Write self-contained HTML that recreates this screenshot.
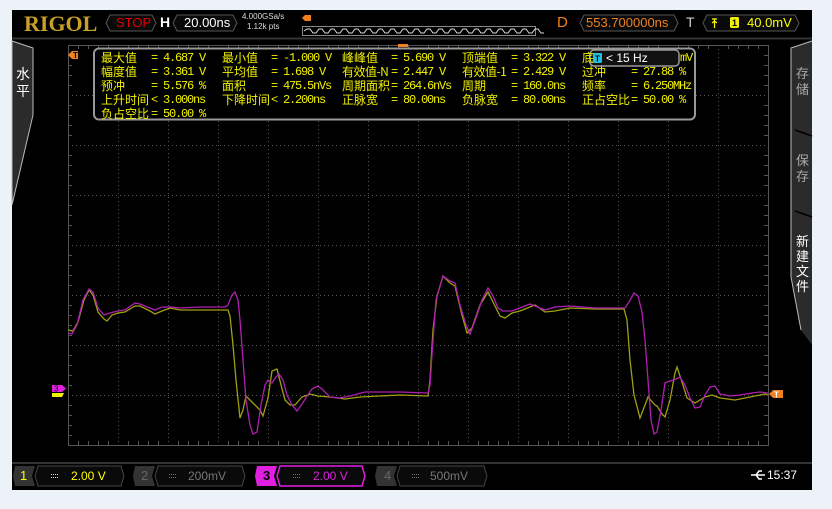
<!DOCTYPE html>
<html><head><meta charset="utf-8"><style>
*{margin:0;padding:0;box-sizing:border-box}
body{width:832px;height:509px;background:#edf1f8;position:relative;overflow:hidden;font-family:"Liberation Sans","Noto Sans CJK SC",sans-serif}
#scr{position:absolute;left:12px;top:10px;width:800px;height:480px;background:#000}
.a{position:absolute;white-space:nowrap}
.m{position:absolute;color:#f2f200;font-size:12px;letter-spacing:-1.2px;line-height:14px;font-family:"Liberation Mono","Noto Sans CJK SC",monospace;white-space:nowrap}
.ml{position:absolute;color:#f2f200;font-size:12px;line-height:14px;font-family:"Noto Sans CJK SC",sans-serif;white-space:nowrap}
</style></head><body>
<div id="scr"></div>
<svg class="a" style="left:0;top:0" width="832" height="509">
 <line x1="12" y1="38.5" x2="812" y2="38.5" stroke="#333" stroke-width="2"/>
 <polygon points="12,41 33,48 33,115 12,205" fill="#2b2b2b" stroke="#bbb" stroke-width="1"/>
 <polygon points="812,41 791,48 791,277 801,330 812,345" fill="#2b2b2b"/>
 <polyline points="812,41 791,48 791,277 801,330" fill="none" stroke="#bbb"/>
 <line x1="795" y1="130" x2="812" y2="136" stroke="#000" stroke-width="1.5"/>
 <line x1="795" y1="211" x2="812" y2="217" stroke="#000" stroke-width="1.5"/>
 <g stroke="#555" stroke-width="1" stroke-dasharray="1,3">
  <line x1="118.5" y1="45" x2="118.5" y2="445"/><line x1="168.5" y1="45" x2="168.5" y2="445"/>
  <line x1="218.5" y1="45" x2="218.5" y2="445"/><line x1="268.5" y1="45" x2="268.5" y2="445"/>
  <line x1="318.5" y1="45" x2="318.5" y2="445"/><line x1="368.5" y1="45" x2="368.5" y2="445"/>
  <line x1="418.5" y1="45" x2="418.5" y2="445"/><line x1="468.5" y1="45" x2="468.5" y2="445"/>
  <line x1="518.5" y1="45" x2="518.5" y2="445"/><line x1="568.5" y1="45" x2="568.5" y2="445"/>
  <line x1="618.5" y1="45" x2="618.5" y2="445"/><line x1="668.5" y1="45" x2="668.5" y2="445"/>
  <line x1="718.5" y1="45" x2="718.5" y2="445"/>
  <line x1="68" y1="95.5" x2="768" y2="95.5"/><line x1="68" y1="145.5" x2="768" y2="145.5"/>
  <line x1="68" y1="195.5" x2="768" y2="195.5"/><line x1="68" y1="245.5" x2="768" y2="245.5"/>
  <line x1="68" y1="295.5" x2="768" y2="295.5"/><line x1="68" y1="345.5" x2="768" y2="345.5"/>
  <line x1="68" y1="395.5" x2="768" y2="395.5"/>
 </g>
 <rect x="68.5" y="45.5" width="700" height="400" fill="none" stroke="#555"/>
 <g stroke="#555" id="tk"></g>
 <polyline fill="none" stroke="#a0a010" stroke-width="1.3" points="68,330 73,331 78,322 84,300 89,290 93,295 98,312 104,319 107,321 112,315 118,313 125,312 135,306 140,306 150,311 155,314 162,311 170,308 180,310 200,310 228,310 230,316 233,345 236,380 240,418 243,410 246,396 252,402 255,405 260,410 263,416 268,398 272,371 277,369 281,385 285,400 290,405 295,405 302,397 310,394 318,396 330,397 345,399 360,397 400,395 428,396 430,380 433,330 437,296 443,276 450,283 455,286 462,315 467,333 472,328 480,305 488,292 493,302 500,316 505,318 512,313 520,311 535,305 545,312 555,311 570,308 595,309 624,309 627,320 630,360 634,395 640,418 645,405 648,397 655,405 657,406 662,414 665,417 670,400 675,373 677,367 682,382 687,398 695,403 705,397 712,395 720,398 735,400 745,398 755,396 765,394 768,395"/>
 <polyline fill="none" stroke="#b020b0" stroke-width="1.3" points="68,333 72,334 77,325 83,300 89,289 93,292 98,308 104,315 110,313 118,311 125,310 135,303 140,304 150,308 155,310 162,307 170,307 180,308 200,307 225,307 228,305 232,295 235,292 238,300 240,320 243,360 246,400 250,425 253,434 257,432 261,405 265,385 268,380 272,383 276,377 279,374 283,380 287,395 292,405 297,411 302,404 307,396 312,389 318,386 323,390 330,397 340,398 350,396 365,392 400,392 428,393 430,385 433,340 436,300 443,276 450,281 455,283 460,305 466,325 470,334 476,318 482,300 488,288 493,296 498,308 503,311 512,311 530,304 545,310 555,307 570,306 595,308 625,308 629,302 634,293 638,296 642,312 645,340 648,380 651,420 654,434 657,432 661,410 665,383 670,381 674,380 680,377 685,385 690,398 695,408 700,407 705,395 710,387 715,386 720,394 730,396 740,395 752,393 760,392 768,393"/>
 <path d="M52,385h10l4,3.5l-4,3.5h-10z" fill="#e020e0"/>
 <text x="54" y="391.5" font-size="8" fill="#000" font-family="Liberation Sans">3</text>
 <path d="M52,393h12l-2,4h-10z" fill="#f0f000"/>
 <path d="M783,390h-10l-4,4l4,4h10z" fill="#f08020"/>
 <text x="774" y="397.5" font-size="8" fill="#fff" font-family="Liberation Sans" font-weight="bold">T</text>
 <path d="M78,51h-6l-4,4l4,4h6z" fill="#f08020"/>
 <text x="73" y="58" font-size="8" fill="#000" font-family="Liberation Sans" font-weight="bold">T</text>
 <rect x="94" y="48.5" width="601" height="71" rx="5" fill="#000" stroke="#999" stroke-width="2"/>
 <path d="M110,15l-4,8l4,8h42l4,-8l-4,-8z" fill="#0a0a0a" stroke="#555"/>
 <path d="M177,15l-4,8l4,8h56l4,-8l-4,-8z" fill="#0a0a0a" stroke="#555"/>
 <path d="M584,15l-4,8l4,8h90l4,-8l-4,-8z" fill="#0a0a0a" stroke="#555"/>
 <path d="M707,15l-4,8l4,8h88l4,-8l-4,-8z" fill="#0a0a0a" stroke="#555"/>
 <path d="M311,15h-6l-3,3l3,3h6z" fill="#f08020"/>
 <rect x="302.5" y="26.5" width="233" height="9" fill="#000" stroke="#888"/>
 <path id="ov" fill="none" stroke="#ddd" stroke-width="1" d=""/>
 <rect x="398" y="44" width="10" height="3" fill="#f08020"/>
 <line x1="12" y1="463" x2="812" y2="463" stroke="#333" stroke-width="2"/>
 <path d="M15,466h20l-3,10l3,10h-20l-2,-10z" fill="#333"/>
 <path d="M38,466h83l3,10l-3,10h-83l-3,-10z" fill="#0a0a0a" stroke="#444"/>
 <path d="M135,466h20l-3,10l3,10h-20l-2,-10z" fill="#333"/>
 <path d="M158,466h84l3,10l-3,10h-84l-3,-10z" fill="#0a0a0a" stroke="#444"/>
 <path d="M257,466h20l-3,10l3,10h-20l-2,-10z" fill="#e020e0"/>
 <path d="M280,466h82l3,10l-3,10h-82l-3,-10z" fill="#0a0a0a" stroke="#e020e0" stroke-width="1.5"/>
 <path d="M377,466h20l-3,10l3,10h-20l-2,-10z" fill="#333"/>
 <path d="M400,466h84l3,10l-3,10h-84l-3,-10z" fill="#0a0a0a" stroke="#444"/>
 <g stroke-width="1"><path d="M51,474.5h7M51,477.5h7" stroke="#f2f200" stroke-dasharray="1,1"/><path d="M169,474.5h7M169,477.5h7" stroke="#777" stroke-dasharray="1,1"/><path d="M293,474.5h7M293,477.5h7" stroke="#e020e0" stroke-dasharray="1,1"/><path d="M412,474.5h7M412,477.5h7" stroke="#777" stroke-dasharray="1,1"/></g>
 <path d="M751,475h14M756,475l3,-4h3M756,475l3,4h3" stroke="#fff" stroke-width="1.5" fill="none"/>
 <rect x="590" y="50" width="89" height="16" rx="4" fill="#111" stroke="#999" stroke-width="1.5"/>
 <rect x="593" y="53" width="9" height="10" rx="1.5" fill="#20c0e0"/>
 <text x="595" y="61.5" font-size="8" fill="#000" font-family="Liberation Sans" font-weight="bold">T</text>
 <rect x="730" y="17" width="9" height="11" rx="1.5" fill="#f0f000"/>
 <text x="732" y="26" font-size="9" fill="#000" font-family="Liberation Sans" font-weight="bold">1</text>
 <path d="M712,19h5M714.5,19v9M712,23l2.5,-2l2.5,2" stroke="#ff0" fill="none" stroke-width="1.2"/>
</svg>
<script>
(function(){var d="M304,31";for(var x=304;x<533;x+=12){d+=" L"+(x+3)+",29 L"+(x+6)+",29 L"+(x+9)+",33 L"+(x+12)+",33";}document.getElementById('ov').setAttribute('d',d);
var g=document.getElementById('tk'),s="";for(var x=78;x<768;x+=10){if((x-68)%50)s+="M"+(x+.5)+",445v-4M"+(x+.5)+",45v4";}for(var y=55;y<445;y+=10){if((y-45)%50)s+="M68,"+(y+.5)+"h4M768,"+(y+.5)+"h-4";}var p=document.createElementNS("http://www.w3.org/2000/svg","path");p.setAttribute("d",s);g.appendChild(p);})();
</script>
<div class="a" style="left:24px;top:11px;font-family:'Liberation Serif',serif;font-weight:bold;font-size:22px;color:#c8a028">RIGOL</div>
<div class="a" style="left:116px;top:15px;font-size:13px;color:#e00000">STOP</div>
<div class="a" style="left:160px;top:14px;font-size:14px;color:#fff;font-weight:bold">H</div>
<div class="a" style="left:184px;top:15px;font-size:13px;color:#fff">20.00ns</div>
<div class="a" style="left:242px;top:12px;font-size:8px;color:#ddd">4.000GSa/s</div>
<div class="a" style="left:247px;top:22px;font-size:8px;color:#ddd">1.12k pts</div>
<div class="a" style="left:557px;top:14px;font-size:15px;color:#f08020">D</div>
<div class="a" style="left:586px;top:15px;font-size:13px;color:#f08020">553.700000ns</div>
<div class="a" style="left:686px;top:14px;font-size:14px;color:#ccc">T</div>
<div class="a" style="left:747px;top:15px;font-size:13px;color:#ff0">40.0mV</div>
<div class="a" style="left:16px;top:66px;font-size:14px;line-height:17px;color:#fff;font-family:'Noto Sans CJK SC',sans-serif;width:12px;white-space:normal">水平</div>
<div class="a" style="left:796px;top:65px;font-size:13px;line-height:16px;color:#aaa;font-family:'Noto Sans CJK SC',sans-serif;width:12px;white-space:normal">存储</div>
<div class="a" style="left:796px;top:152px;font-size:13px;line-height:16px;color:#aaa;font-family:'Noto Sans CJK SC',sans-serif;width:12px;white-space:normal">保存</div>
<div class="a" style="left:796px;top:233px;font-size:13px;line-height:15px;color:#fff;font-family:'Noto Sans CJK SC',sans-serif;width:12px;white-space:normal">新建文件</div>

<div class="ml" style="left:101px;top:51px">最大值</div><div class="m" style="left:151px;top:51px">= 4.687 V</div>
<div class="ml" style="left:222px;top:51px">最小值</div><div class="m" style="left:271px;top:51px">= -1.000 V</div>
<div class="ml" style="left:342px;top:51px">峰峰值</div><div class="m" style="left:391px;top:51px">= 5.690 V</div>
<div class="ml" style="left:462px;top:51px">顶端值</div><div class="m" style="left:511px;top:51px">= 3.322 V</div>
<div class="ml" style="left:582px;top:51px">底</div><div class="m" style="left:680px;top:51px">mV</div>
<div class="ml" style="left:101px;top:65px">幅度值</div><div class="m" style="left:151px;top:65px">= 3.361 V</div>
<div class="ml" style="left:222px;top:65px">平均值</div><div class="m" style="left:271px;top:65px">= 1.698 V</div>
<div class="ml" style="left:342px;top:65px;letter-spacing:-0.5px">有效值-N</div><div class="m" style="left:391px;top:65px">= 2.447 V</div>
<div class="ml" style="left:462px;top:65px;letter-spacing:-0.5px">有效值-1</div><div class="m" style="left:511px;top:65px">= 2.429 V</div>
<div class="ml" style="left:582px;top:65px">过冲</div><div class="m" style="left:631px;top:65px">= 27.88 %</div>
<div class="ml" style="left:101px;top:79px">预冲</div><div class="m" style="left:151px;top:79px">= 5.576 %</div>
<div class="ml" style="left:222px;top:79px">面积</div><div class="m" style="left:271px;top:79px">= 475.5nVs</div>
<div class="ml" style="left:342px;top:79px">周期面积</div><div class="m" style="left:391px;top:79px">= 264.6nVs</div>
<div class="ml" style="left:462px;top:79px">周期</div><div class="m" style="left:511px;top:79px">= 160.0ns</div>
<div class="ml" style="left:582px;top:79px">频率</div><div class="m" style="left:631px;top:79px">= 6.250MHz</div>
<div class="ml" style="left:101px;top:93px">上升时间</div><div class="m" style="left:151px;top:93px">&lt; 3.000ns</div>
<div class="ml" style="left:222px;top:93px">下降时间</div><div class="m" style="left:271px;top:93px">&lt; 2.200ns</div>
<div class="ml" style="left:342px;top:93px">正脉宽</div><div class="m" style="left:391px;top:93px">= 80.00ns</div>
<div class="ml" style="left:462px;top:93px">负脉宽</div><div class="m" style="left:511px;top:93px">= 80.00ns</div>
<div class="ml" style="left:582px;top:93px">正占空比</div><div class="m" style="left:631px;top:93px">= 50.00 %</div>
<div class="ml" style="left:101px;top:107px">负占空比</div><div class="m" style="left:151px;top:107px">= 50.00 %</div>
<div class="a" style="left:606px;top:51px;font-size:12px;color:#fff">&lt; 15 Hz</div>

<div class="a" style="left:20px;top:468px;font-size:13px;color:#ff0">1</div>
<div class="a" style="left:71px;top:469px;font-size:12px;color:#ff0">2.00 V</div>
<div class="a" style="left:141px;top:468px;font-size:13px;color:#666">2</div>
<div class="a" style="left:188px;top:469px;font-size:12px;color:#777">200mV</div>
<div class="a" style="left:263px;top:468px;font-size:13px;color:#000;font-weight:bold">3</div>
<div class="a" style="left:313px;top:469px;font-size:12px;color:#e020e0">2.00 V</div>
<div class="a" style="left:384px;top:468px;font-size:13px;color:#666">4</div>
<div class="a" style="left:430px;top:469px;font-size:12px;color:#777">500mV</div>
<div class="a" style="left:767px;top:468px;font-size:12px;color:#fff">15:37</div>
</body></html>
